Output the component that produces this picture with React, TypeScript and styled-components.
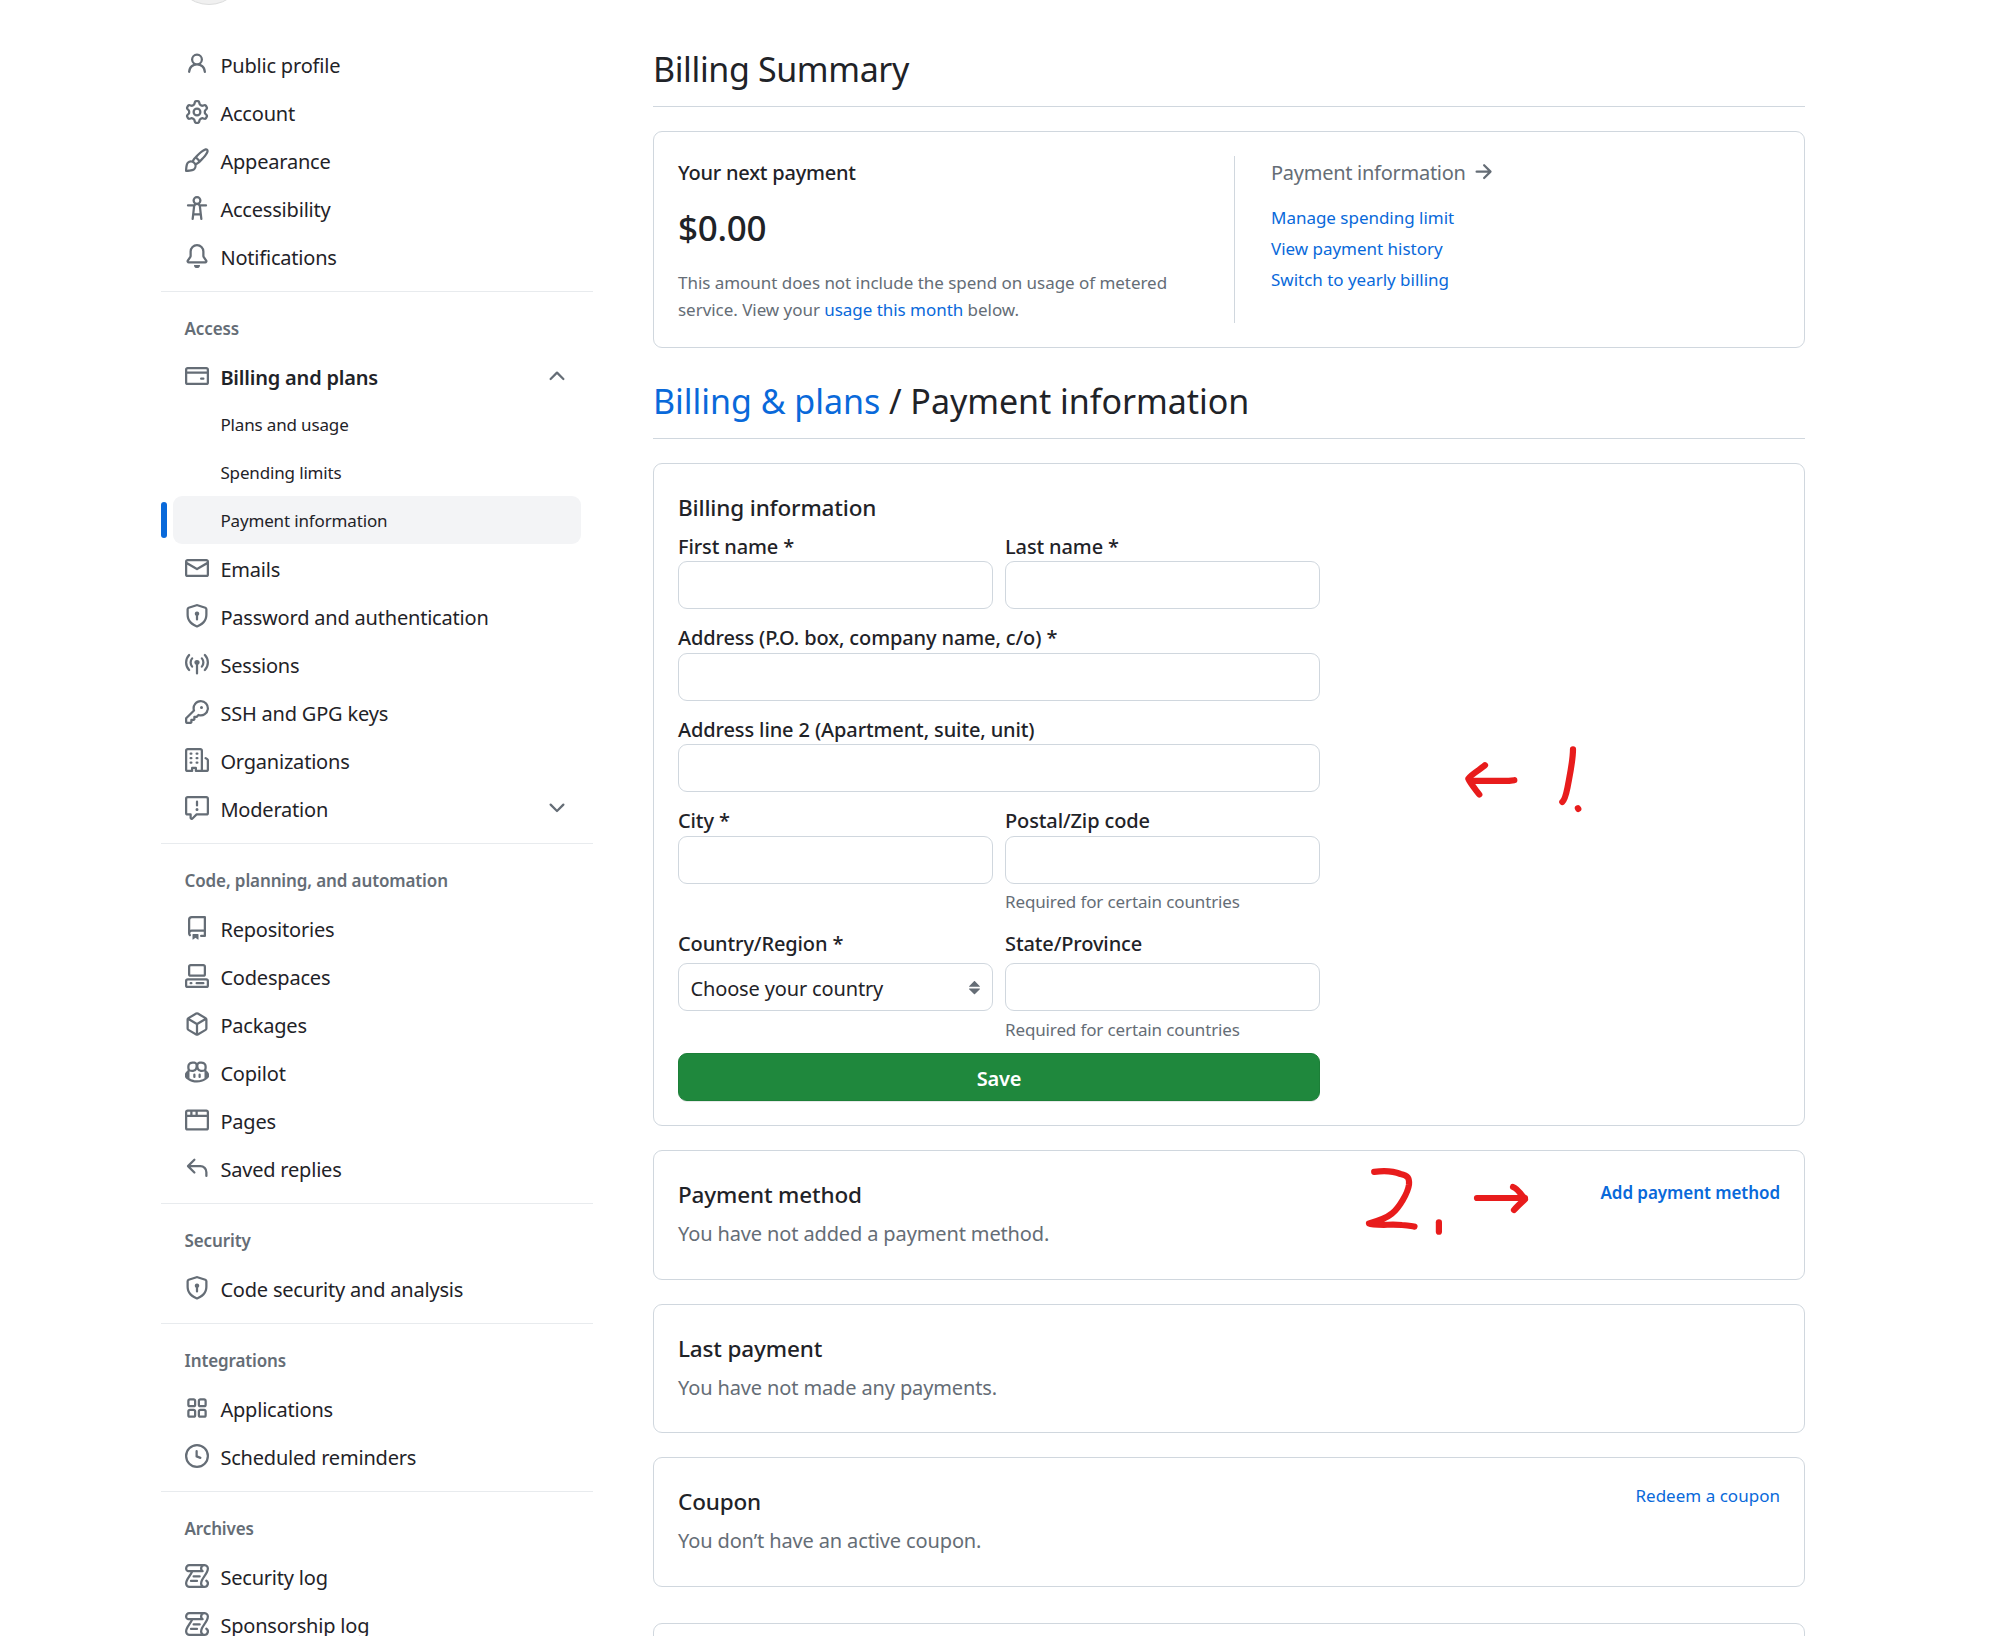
import React from 'react';
import styled, { createGlobalStyle, css } from 'styled-components';

const color = {
  text: '#1f2328',
  muted: '#656d76',
  link: '#0969da',
  border: '#d0d7de',
  divider: '#e8ebee',
  hover: '#f3f4f6',
  green: '#1f883d',
  ink: '#e81c1c',
};

const GlobalStyle = createGlobalStyle`
  *, *::before, *::after { box-sizing: border-box; }
  html, body { margin: 0; height: 1636px; overflow: hidden; background: #fff; }
  body {
    font-family: "Noto Sans", "Open Sans", sans-serif;
    font-size: 20px;
    color: ${color.text};
  }
  h1, h2, h3, p, ul { margin: 0; padding: 0; }
  ul { list-style: none; }
`;

/* ---------- icons (16-unit grid, drawn at 24px) ---------- */

const paths = {
  person:
    'M10.561 8.073a6.005 6.005 0 0 1 3.432 5.142.75.75 0 1 1-1.498.07 4.5 4.5 0 0 0-8.99 0 .75.75 0 0 1-1.498-.07 6.004 6.004 0 0 1 3.431-5.142 3.999 3.999 0 1 1 5.123 0ZM10.5 5a2.5 2.5 0 1 0-5 0 2.5 2.5 0 0 0 5 0Z',
  gear:
    'M8 0a8.2 8.2 0 0 1 .701.031C9.444.095 9.99.645 10.16 1.29l.288 1.107c.018.066.079.158.212.224.231.114.454.243.668.386.123.082.233.09.299.071l1.103-.303c.644-.176 1.392.021 1.82.63.27.385.506.792.704 1.218.315.675.111 1.422-.364 1.891l-.814.806c-.049.048-.098.147-.088.294.016.257.016.515 0 .772-.01.147.038.246.088.294l.814.806c.475.469.679 1.216.364 1.891a7.977 7.977 0 0 1-.704 1.217c-.428.61-1.176.807-1.82.63l-1.102-.302c-.067-.019-.177-.011-.3.071a5.909 5.909 0 0 1-.668.386c-.133.066-.194.158-.211.224l-.29 1.106c-.168.646-.715 1.196-1.458 1.26a8.006 8.006 0 0 1-1.402 0c-.743-.064-1.289-.614-1.458-1.26l-.289-1.106c-.018-.066-.079-.158-.212-.224a5.738 5.738 0 0 1-.668-.386c-.123-.082-.233-.09-.299-.071l-1.103.303c-.644.176-1.392-.021-1.82-.63a8.12 8.12 0 0 1-.704-1.218c-.315-.675-.111-1.422.363-1.891l.815-.806c.05-.048.098-.147.088-.294a6.214 6.214 0 0 1 0-.772c.01-.147-.038-.246-.088-.294l-.815-.806C.635 6.045.431 5.298.746 4.623a7.92 7.92 0 0 1 .704-1.217c.428-.61 1.176-.807 1.82-.63l1.102.302c.067.019.177.011.3-.071.214-.143.437-.272.668-.386.133-.066.194-.158.211-.224l.29-1.106C6.009.645 6.556.095 7.299.03 7.53.01 7.764 0 8 0Zm-.571 1.525c-.036.003-.108.036-.137.146l-.289 1.105c-.147.561-.549.967-.998 1.189-.173.086-.34.183-.5.29-.417.278-.97.423-1.529.27l-1.103-.303c-.109-.03-.175.016-.195.045-.22.312-.412.644-.573.99-.014.031-.021.11.059.19l.815.806c.411.406.562.957.53 1.456a4.709 4.709 0 0 0 0 .582c.032.499-.119 1.05-.53 1.456l-.815.806c-.081.08-.073.159-.059.19.162.346.353.677.573.989.02.03.085.076.195.046l1.102-.303c.56-.153 1.113-.008 1.53.27.161.107.328.204.501.29.447.222.85.629.997 1.189l.289 1.105c.029.109.101.143.137.146a6.6 6.6 0 0 0 1.142 0c.036-.003.108-.036.137-.146l.289-1.105c.147-.561.549-.967.998-1.189.173-.086.34-.183.5-.29.417-.278.97-.423 1.529-.27l1.103.303c.109.029.175-.016.195-.045.22-.313.411-.644.573-.99.014-.031.021-.11-.059-.19l-.815-.806c-.411-.406-.562-.957-.53-1.456a4.709 4.709 0 0 0 0-.582c-.032-.499.119-1.05.53-1.456l.815-.806c.081-.08.073-.159.059-.19a6.464 6.464 0 0 0-.573-.989c-.02-.03-.085-.076-.195-.046l-1.102.303c-.56.153-1.113.008-1.53-.27a4.44 4.44 0 0 0-.501-.29c-.447-.222-.85-.629-.997-1.189l-.289-1.105c-.029-.11-.101-.143-.137-.146a6.6 6.6 0 0 0-1.142 0ZM11 8a3 3 0 1 1-6 0 3 3 0 0 1 6 0ZM9.5 8a1.5 1.5 0 1 0-3.001.001A1.5 1.5 0 0 0 9.5 8Z',
  paintbrush:
    'M11.134 1.535c.7-.509 1.416-.942 2.076-1.155.649-.21 1.463-.267 2.069.34.603.601.568 1.411.368 2.07-.202.668-.624 1.39-1.125 2.096-1.011 1.424-2.496 2.987-3.775 4.249-1.098 1.084-2.132 1.839-3.04 2.3a3.744 3.744 0 0 1-1.055 3.217c-.431.431-1.065.691-1.657.861-.614.177-1.294.287-1.914.357A21.151 21.151 0 0 1 .797 16H.743l.007-.75H.749L.742 16a.75.75 0 0 1-.743-.742l.743-.008-.742.007v-.054a21.25 21.25 0 0 1 .13-2.284c.067-.647.187-1.287.358-1.914.17-.591.43-1.226.86-1.657a3.746 3.746 0 0 1 3.227-1.054c.466-.893 1.225-1.907 2.314-2.982 1.271-1.255 2.833-2.75 4.245-3.777ZM1.62 13.089c-.051.464-.086.929-.104 1.395.466-.018.932-.053 1.396-.104a10.511 10.511 0 0 0 1.668-.309c.526-.151.856-.325 1.011-.48a2.25 2.25 0 1 0-3.182-3.182c-.155.155-.329.485-.48 1.01a10.515 10.515 0 0 0-.309 1.67Zm10.396-10.34c-1.224.89-2.605 2.189-3.822 3.384l1.718 1.718c1.21-1.205 2.51-2.597 3.387-3.833.47-.662.78-1.227.912-1.662.134-.444.032-.551.009-.575h-.001V1.78c-.014-.014-.113-.113-.548.027-.432.14-.995.462-1.655.942Zm-4.832 7.266-.001.001a9.859 9.859 0 0 0 1.63-1.142L7.155 7.216a9.7 9.7 0 0 0-1.161 1.607c.482.302.889.71 1.19 1.192Z',
  accessibility:
    'M9.923 5.302c.063.063.122.129.178.198H14A.75.75 0 0 1 14 7h-3.3l.578 5.163.362 2.997a.75.75 0 0 1-1.49.18L9.868 13H6.132l-.282 2.34a.75.75 0 0 1-1.49-.18l.362-2.997L5.3 7H2a.75.75 0 0 1 0-1.5h3.9a2.54 2.54 0 0 1 .176-.198 3 3 0 1 1 3.847 0ZM9.2 7.073h-.001a1.206 1.206 0 0 0-2.398 0L6.305 11.5h3.39ZM9.5 3a1.5 1.5 0 1 0-3.001.001A1.5 1.5 0 0 0 9.5 3Z',
  bell:
    'M8 16a2 2 0 0 0 1.985-1.75c.017-.137-.097-.25-.235-.25h-3.5c-.138 0-.252.113-.235.25A2 2 0 0 0 8 16ZM3 5a5 5 0 0 1 10 0v2.947c0 .05.015.098.042.139l1.703 2.555A1.519 1.519 0 0 1 13.482 13H2.518a1.516 1.516 0 0 1-1.263-2.36l1.703-2.554A.255.255 0 0 0 3 7.947Zm5-3.5A3.5 3.5 0 0 0 4.5 5v2.947c0 .346-.102.683-.294.97l-1.703 2.556a.017.017 0 0 0-.003.01l.001.006c0 .002.002.004.004.006l.006.004.007.001h10.964l.007-.001.006-.004.004-.006.001-.007a.017.017 0 0 0-.003-.01l-1.703-2.554a1.745 1.745 0 0 1-.294-.97V5A3.5 3.5 0 0 0 8 1.5Z',
  creditCard:
    'M10.75 9a.75.75 0 0 0 0 1.5h1.5a.75.75 0 0 0 0-1.5h-1.5ZM0 3.75C0 2.784.784 2 1.75 2h12.5c.966 0 1.75.784 1.75 1.75v8.5A1.75 1.75 0 0 1 14.25 14H1.75A1.75 1.75 0 0 1 0 12.25ZM14.5 6.5h-13v5.75c0 .138.112.25.25.25h12.5a.25.25 0 0 0 .25-.25Zm0-2.75a.25.25 0 0 0-.25-.25H1.75a.25.25 0 0 0-.25.25V5h13Z',
  mail:
    'M1.75 2h12.5c.966 0 1.75.784 1.75 1.75v8.5A1.75 1.75 0 0 1 14.25 14H1.75A1.75 1.75 0 0 1 0 12.25v-8.5C0 2.784.784 2 1.75 2ZM1.5 12.251c0 .138.112.25.25.25h12.5a.25.25 0 0 0 .25-.25V5.809L8.38 9.397a.75.75 0 0 1-.76 0L1.5 5.809v6.442Zm13-8.181v-.32a.25.25 0 0 0-.25-.25H1.75a.25.25 0 0 0-.25.25v.32L8 7.88Z',
  shieldLock:
    'm8.533.133 5.25 1.68A1.75 1.75 0 0 1 15 3.48V7c0 1.566-.32 3.182-1.303 4.682-.983 1.498-2.585 2.813-5.032 3.855a1.697 1.697 0 0 1-1.33 0c-2.447-1.042-4.049-2.357-5.032-3.855C1.32 10.182 1 8.566 1 7V3.48a1.755 1.755 0 0 1 1.217-1.667l5.25-1.68a1.748 1.748 0 0 1 1.066 0Zm-.61 1.429.001.001-5.25 1.68a.251.251 0 0 0-.174.237V7c0 1.36.275 2.666 1.057 3.859.784 1.194 2.121 2.342 4.366 3.298a.196.196 0 0 0 .154 0c2.245-.957 3.582-2.103 4.366-3.297C13.225 9.666 13.5 8.358 13.5 7V3.48a.25.25 0 0 0-.174-.238l-5.25-1.68a.25.25 0 0 0-.153 0ZM9.5 6.5c0 .536-.286 1.032-.75 1.3v2.45a.75.75 0 0 1-1.5 0V7.8A1.5 1.5 0 1 1 9.5 6.5Z',
  broadcast:
    'M8.75 8.582v5.668a.75.75 0 0 1-1.5 0V8.582a1.75 1.75 0 1 1 1.5 0Zm3.983-7.125a.75.75 0 0 1 1.06.026A7.976 7.976 0 0 1 16 7c0 2.139-.84 4.083-2.207 5.517a.75.75 0 1 1-1.086-1.034A6.474 6.474 0 0 0 14.5 7a6.474 6.474 0 0 0-1.793-4.483.75.75 0 0 1 .026-1.06Zm-9.466 0c.3.286.312.76.026 1.06A6.474 6.474 0 0 0 1.5 7a6.47 6.47 0 0 0 1.793 4.483.75.75 0 0 1-1.086 1.034A7.973 7.973 0 0 1 0 7c0-2.139.84-4.083 2.207-5.517a.75.75 0 0 1 1.06-.026Zm8.556 2.321A4.988 4.988 0 0 1 13 7a4.988 4.988 0 0 1-1.177 3.222.75.75 0 1 1-1.146-.967A3.487 3.487 0 0 0 11.5 7c0-.86-.309-1.645-.823-2.255a.75.75 0 0 1 1.146-.967Zm-6.492.958A3.48 3.48 0 0 0 4.5 7a3.48 3.48 0 0 0 .823 2.255.75.75 0 0 1-1.146.967A4.981 4.981 0 0 1 3 7a4.982 4.982 0 0 1 1.188-3.236.75.75 0 1 1 1.143.972Z',
  key:
    'M10.5 0a5.499 5.499 0 1 1-1.288 10.848l-.932.932a.749.749 0 0 1-.53.22H7v.75a.749.749 0 0 1-.22.53l-.5.5a.749.749 0 0 1-.53.22H5v.75a.749.749 0 0 1-.22.53l-.5.5a.749.749 0 0 1-.53.22h-2A1.75 1.75 0 0 1 0 14.25v-2c0-.199.079-.389.22-.53l4.932-4.932A5.5 5.5 0 0 1 10.5 0Zm-4 5.5c-.001.431.069.86.205 1.269a.75.75 0 0 1-.181.768L1.5 12.56v1.69c0 .138.112.25.25.25h1.69l.06-.06v-1.19a.75.75 0 0 1 .75-.75h1.19l.06-.06v-1.19a.75.75 0 0 1 .75-.75h1.19l1.023-1.025a.75.75 0 0 1 .768-.18A4 4 0 1 0 6.5 5.5ZM11 6a1 1 0 1 1 0-2 1 1 0 0 1 0 2Z',
  organization:
    'M1.75 16A1.75 1.75 0 0 1 0 14.25V1.75C0 .784.784 0 1.75 0h8.5C11.216 0 12 .784 12 1.75v12.5c0 .085-.006.168-.018.25h2.268a.25.25 0 0 0 .25-.25V8.285a.25.25 0 0 0-.111-.208l-1.055-.703a.749.749 0 1 1 .832-1.248l1.055.703c.487.325.779.871.779 1.456v5.965A1.75 1.75 0 0 1 14.25 16h-3.5a.766.766 0 0 1-.197-.026c-.099.017-.2.026-.303.026h-3a.75.75 0 0 1-.75-.75V14h-1v1.25a.75.75 0 0 1-.75.75Zm-.25-1.75c0 .138.112.25.25.25H4v-1.25a.75.75 0 0 1 .75-.75h2.5a.75.75 0 0 1 .75.75v1.25h2.25a.25.25 0 0 0 .25-.25V1.75a.25.25 0 0 0-.25-.25h-8.5a.25.25 0 0 0-.25.25ZM3.75 6h.5a.75.75 0 0 1 0 1.5h-.5a.75.75 0 0 1 0-1.5ZM3 3.75A.75.75 0 0 1 3.75 3h.5a.75.75 0 0 1 0 1.5h-.5A.75.75 0 0 1 3 3.75Zm4 3A.75.75 0 0 1 7.75 6h.5a.75.75 0 0 1 0 1.5h-.5A.75.75 0 0 1 7 6.75ZM7.75 3h.5a.75.75 0 0 1 0 1.5h-.5a.75.75 0 0 1 0-1.5ZM3 9.75A.75.75 0 0 1 3.75 9h.5a.75.75 0 0 1 0 1.5h-.5A.75.75 0 0 1 3 9.75ZM7.75 9h.5a.75.75 0 0 1 0 1.5h-.5a.75.75 0 0 1 0-1.5Z',
  report:
    'M0 1.75C0 .784.784 0 1.75 0h12.5C15.216 0 16 .784 16 1.75v9.5A1.75 1.75 0 0 1 14.25 13H8.06l-2.573 2.573A1.458 1.458 0 0 1 3 14.543V13H1.75A1.75 1.75 0 0 1 0 11.25Zm1.75-.25a.25.25 0 0 0-.25.25v9.5c0 .138.112.25.25.25h2a.75.75 0 0 1 .75.75v2.19l2.72-2.72a.749.749 0 0 1 .53-.22h6.5a.25.25 0 0 0 .25-.25v-9.5a.25.25 0 0 0-.25-.25Zm7 2.25v2.5a.75.75 0 0 1-1.5 0v-2.5a.75.75 0 0 1 1.5 0ZM9 9a1 1 0 1 1-2 0 1 1 0 0 1 2 0Z',
  repo:
    'M2 2.5A2.5 2.5 0 0 1 4.5 0h8.75a.75.75 0 0 1 .75.75v12.5a.75.75 0 0 1-.75.75h-2.5a.75.75 0 0 1 0-1.5h1.75v-2h-8a1 1 0 0 0-.714 1.7.75.75 0 1 1-1.072 1.05A2.495 2.495 0 0 1 2 11.5Zm10.5-1h-8a1 1 0 0 0-1 1v6.708A2.486 2.486 0 0 1 4.5 9h8ZM5 12.25a.25.25 0 0 1 .25-.25h3.5a.25.25 0 0 1 .25.25v3.25a.25.25 0 0 1-.4.2l-1.45-1.087a.249.249 0 0 0-.3 0L5.4 15.7a.25.25 0 0 1-.4-.2Z',
  codespaces:
    'M0 11.25c0-.966.784-1.75 1.75-1.75h12.5c.966 0 1.75.784 1.75 1.75v3A1.75 1.75 0 0 1 14.25 16H1.75A1.75 1.75 0 0 1 0 14.25Zm2-9.5C2 .784 2.784 0 3.75 0h8.5C13.216 0 14 .784 14 1.75v5a1.75 1.75 0 0 1-1.75 1.75h-8.5A1.75 1.75 0 0 1 2 6.75Zm1.75-.25a.25.25 0 0 0-.25.25v5c0 .138.112.25.25.25h8.5a.25.25 0 0 0 .25-.25v-5a.25.25 0 0 0-.25-.25Zm-2 9.5a.25.25 0 0 0-.25.25v3c0 .138.112.25.25.25h12.5a.25.25 0 0 0 .25-.25v-3a.25.25 0 0 0-.25-.25ZM7 12.75a.75.75 0 0 1 .75-.75h4.5a.75.75 0 0 1 0 1.5h-4.5a.75.75 0 0 1-.75-.75Zm-4 0a.75.75 0 0 1 .75-.75h.5a.75.75 0 0 1 0 1.5h-.5a.75.75 0 0 1-.75-.75Z',
  package:
    'm8.878.392 5.25 3.045c.54.314.872.89.872 1.514v6.098a1.75 1.75 0 0 1-.872 1.514l-5.25 3.045a1.75 1.75 0 0 1-1.756 0l-5.25-3.045A1.75 1.75 0 0 1 1 11.049V4.951c0-.624.332-1.201.872-1.514L7.122.392a1.75 1.75 0 0 1 1.756 0ZM7.875 1.69l-4.63 2.685L8 7.133l4.755-2.758-4.63-2.685a.248.248 0 0 0-.25 0ZM2.5 5.677v5.372c0 .09.047.171.125.216l4.625 2.683V8.432Zm6.25 8.271 4.625-2.683a.25.25 0 0 0 .125-.216V5.677L8.75 8.432Z',
  copilot:
    'M7.998 15.035c-4.562 0-7.873-2.914-7.998-3.749V9.338c.085-.628.677-1.686 1.588-2.065.013-.07.024-.143.036-.218.029-.183.06-.384.126-.612-.201-.508-.254-1.084-.254-1.656 0-.87.128-1.769.693-2.484.579-.733 1.494-1.124 2.724-1.261 1.206-.134 2.262.034 2.944.765.05.053.096.108.139.165.044-.057.094-.112.143-.165.682-.731 1.738-.899 2.944-.765 1.23.137 2.145.528 2.724 1.261.566.715.693 1.614.693 2.484 0 .572-.053 1.148-.254 1.656.066.228.098.429.126.612.012.076.024.148.037.218.924.385 1.522 1.471 1.591 2.095v1.872c0 .766-3.351 3.795-8.002 3.795Zm0-1.485c2.28 0 4.584-1.11 5.002-1.433V7.862l-.023-.116c-.49.21-1.075.291-1.727.291-1.146 0-2.059-.327-2.71-.991A3.222 3.222 0 0 1 8 6.303a3.24 3.24 0 0 1-.544.743c-.65.664-1.563.991-2.71.991-.652 0-1.236-.081-1.727-.291l-.023.116v4.255c.419.323 2.722 1.433 5.002 1.433ZM6.762 2.83c-.193-.206-.637-.413-1.682-.297-1.019.113-1.479.404-1.713.7-.247.312-.369.789-.369 1.554 0 .793.129 1.171.308 1.371.162.181.519.379 1.442.379.853 0 1.339-.235 1.638-.54.315-.322.527-.827.617-1.553.117-.935-.037-1.395-.241-1.614Zm4.155-.297c-1.044-.116-1.488.091-1.681.297-.204.219-.359.679-.242 1.614.091.726.303 1.231.618 1.553.299.305.784.54 1.638.54.922 0 1.28-.198 1.442-.379.179-.2.308-.578.308-1.371 0-.765-.123-1.242-.37-1.554-.233-.296-.693-.587-1.713-.7ZM6.25 9.037a.75.75 0 0 1 .75.75v1.501a.75.75 0 0 1-1.5 0V9.787a.75.75 0 0 1 .75-.75Zm4.25.75v1.501a.75.75 0 0 1-1.5 0V9.787a.75.75 0 0 1 1.5 0Z',
  browser:
    'M0 2.75C0 1.784.784 1 1.75 1h12.5c.966 0 1.75.784 1.75 1.75v10.5A1.75 1.75 0 0 1 14.25 15H1.75A1.75 1.75 0 0 1 0 13.25ZM14.5 6h-13v7.25c0 .138.112.25.25.25h12.5a.25.25 0 0 0 .25-.25Zm-6-3.5v2h6V2.75a.25.25 0 0 0-.25-.25ZM5 2.5v2h2v-2Zm-3.25 0a.25.25 0 0 0-.25.25V4.5h2v-2Z',
  reply:
    'M6.78 1.97a.75.75 0 0 1 0 1.06L3.81 6h6.44A4.75 4.75 0 0 1 15 10.75v2.5a.75.75 0 0 1-1.5 0v-2.5a3.25 3.25 0 0 0-3.25-3.25H3.81l2.97 2.97a.749.749 0 0 1-.326 1.275.749.749 0 0 1-.734-.215L1.47 7.28a.75.75 0 0 1 0-1.06l4.25-4.25a.75.75 0 0 1 1.06 0Z',
  apps:
    'M1.5 3.25c0-.966.784-1.75 1.75-1.75h2.5c.966 0 1.75.784 1.75 1.75v2.5A1.75 1.75 0 0 1 5.75 7.5h-2.5A1.75 1.75 0 0 1 1.5 5.75Zm7 0c0-.966.784-1.75 1.75-1.75h2.5c.966 0 1.75.784 1.75 1.75v2.5a1.75 1.75 0 0 1-1.75 1.75h-2.5A1.75 1.75 0 0 1 8.5 5.75Zm-7 7c0-.966.784-1.75 1.75-1.75h2.5c.966 0 1.75.784 1.75 1.75v2.5a1.75 1.75 0 0 1-1.75 1.75h-2.5a1.75 1.75 0 0 1-1.75-1.75Zm7 0c0-.966.784-1.75 1.75-1.75h2.5c.966 0 1.75.784 1.75 1.75v2.5a1.75 1.75 0 0 1-1.75 1.75h-2.5a1.75 1.75 0 0 1-1.75-1.75ZM3.25 3a.25.25 0 0 0-.25.25v2.5c0 .138.112.25.25.25h2.5A.25.25 0 0 0 6 5.75v-2.5A.25.25 0 0 0 5.75 3Zm7 0a.25.25 0 0 0-.25.25v2.5c0 .138.112.25.25.25h2.5a.25.25 0 0 0 .25-.25v-2.5a.25.25 0 0 0-.25-.25Zm-7 7a.25.25 0 0 0-.25.25v2.5c0 .138.112.25.25.25h2.5a.25.25 0 0 0 .25-.25v-2.5a.25.25 0 0 0-.25-.25Zm7 0a.25.25 0 0 0-.25.25v2.5c0 .138.112.25.25.25h2.5a.25.25 0 0 0 .25-.25v-2.5a.25.25 0 0 0-.25-.25Z',
  clock:
    'M8 0a8 8 0 1 1 0 16A8 8 0 0 1 8 0ZM1.5 8a6.5 6.5 0 1 0 13 0 6.5 6.5 0 0 0-13 0Zm7-3.25v2.992l2.028.812a.75.75 0 0 1-.557 1.392l-2.5-1A.751.751 0 0 1 7 8.25v-3.5a.75.75 0 0 1 1.5 0Z',
  log:
    'M5 8.25a.75.75 0 0 1 .75-.75h4a.75.75 0 0 1 0 1.5h-4A.75.75 0 0 1 5 8.25ZM4 10.5A.75.75 0 0 0 4 12h4a.75.75 0 0 0 0-1.5H4ZM13-.005c1.654 0 3 1.328 3 3 0 .982-.338 1.933-.783 2.818-.443.879-1.028 1.758-1.582 2.588l-.011.017c-.568.853-1.104 1.659-1.501 2.446-.398.789-.623 1.494-.623 2.136a1.5 1.5 0 1 0 2.333-1.248.75.75 0 0 1 .834-1.246A3 3 0 0 1 13 16H3a3 3 0 0 1-3-3c0-1.582.891-3.135 1.777-4.506.209-.322.418-.637.623-.946.473-.709.923-1.386 1.287-2.048H2.51c-.576 0-1.381-.133-1.907-.783A2.68 2.68 0 0 1 0 2.995a3 3 0 0 1 3-3Zm0 1.5a1.5 1.5 0 0 0-1.5 1.5c0 .476.223.834.667 1.132A.75.75 0 0 1 11.75 5.5H5.368c-.467 1.003-1.141 2.015-1.773 2.963-.192.289-.381.571-.558.845C2.13 10.711 1.5 11.916 1.5 13A1.5 1.5 0 0 0 3 14.5h7.401A2.989 2.989 0 0 1 10 13c0-.979.338-1.928.784-2.812.441-.874 1.023-1.748 1.575-2.576l.017-.026c.568-.853 1.103-1.658 1.501-2.448.398-.79.623-1.497.623-2.143 0-.838-.669-1.5-1.5-1.5Zm-10 0a1.5 1.5 0 0 0-1.5 1.5c0 .321.1.569.27.778.097.12.325.227.74.227h7.674A2.737 2.737 0 0 1 10 2.995c0-.546.146-1.059.401-1.5Z',
  arrowRight:
    'M8.22 2.97a.75.75 0 0 1 1.06 0l4.25 4.25a.75.75 0 0 1 0 1.06l-4.25 4.25a.751.751 0 0 1-1.042-.018.751.751 0 0 1-.018-1.042l2.97-2.97H3.75a.75.75 0 0 1 0-1.5h7.44L8.22 4.03a.75.75 0 0 1 0-1.06Z',
  chevronDown:
    'M12.78 5.22a.749.749 0 0 1 0 1.06l-4.25 4.25a.749.749 0 0 1-1.06 0L3.22 6.28a.749.749 0 1 1 1.06-1.06L8 8.939l3.72-3.719a.749.749 0 0 1 1.06 0Z',
  chevronUp:
    'M3.22 10.53a.749.749 0 0 1 0-1.06l4.25-4.25a.749.749 0 0 1 1.06 0l4.25 4.25a.749.749 0 1 1-1.06 1.06L8 6.811 4.28 10.53a.749.749 0 0 1-1.06 0Z',
  selectArrows:
    'm4.074 9.427 3.396 3.396a.25.25 0 0 0 .354 0l3.396-3.396A.25.25 0 0 0 11.043 9H4.251a.25.25 0 0 0-.177.427ZM4.074 7.47 7.47 4.073a.25.25 0 0 1 .354 0L11.22 7.47a.25.25 0 0 1-.177.426H4.251a.25.25 0 0 1-.177-.426Z',
};
type IconName = keyof typeof paths;

const IconSvg = styled.svg`
  flex: none;
  width: 24px;
  height: 24px;
  fill: ${color.muted};
`;
const Icon = ({ name }: { name: IconName }) => (
  <IconSvg viewBox="0 0 16 16" aria-hidden="true">
    <path d={paths[name]} />
  </IconSvg>
);

/* ---------- page frame ---------- */

const Page = styled.div`
  position: relative;
  display: flex;
  gap: 60px;
  width: 2008px;
  height: 1636px;
  padding-left: 161px;
  overflow: hidden;
`;

/* ---------- sidebar ---------- */

const Sidebar = styled.aside`
  flex: none;
  width: 432px;
  margin-top: -67px;
`;
const Avatar = styled.div`
  width: 72px;
  height: 72px;
  margin: 0 0 35px 12px;
  border-radius: 50%;
  background: #f0f0f0;
  border: 1px solid #dcdddd;
`;
const Group = styled.ul`
  & + & {
    margin-top: 11px;
    border-top: 1px solid ${color.divider};
  }
`;
const GroupTitle = styled.li`
  display: flex;
  align-items: center;
  height: 60px;
  padding: 13px 24px 0 23.5px;
  font-size: 17px;
  font-weight: 600;
  letter-spacing: -0.12px;
  color: ${color.muted};
`;
const NavRow = styled.li<{ $sub?: boolean; $current?: boolean }>`
  position: relative;
  display: flex;
  align-items: center;
  gap: 11.4px;
  height: 48px;
  margin: 0 12px;
  padding: 0 12px;
  border-radius: 9px;
  ${p => p.$sub && css`padding-left: 47.4px;`}
  ${p =>
    p.$current &&
    css`
      background: ${color.hover};
      &::before {
        content: '';
        position: absolute;
        left: -12px;
        top: 6px;
        width: 6px;
        height: 36px;
        border-radius: 3px;
        background: ${color.link};
      }
    `}
`;
const NavLabel = styled.span<{ $sub?: boolean; $bold?: boolean }>`
  flex: 1;
  white-space: nowrap;
  padding-top: ${p => (p.$sub ? 0 : 2)}px;
  font-size: ${p => (p.$sub ? 17 : 20)}px;
  font-weight: ${p => (p.$bold ? 600 : 400)};
  letter-spacing: ${p => (p.$sub ? -0.15 : -0.2)}px;
`;

type NavItem = { label: string; icon?: IconName; trailing?: IconName; bold?: boolean; current?: boolean };
const nav: { title?: string; items: NavItem[] }[] = [
  {
    items: [
      { label: 'Public profile', icon: 'person' },
      { label: 'Account', icon: 'gear' },
      { label: 'Appearance', icon: 'paintbrush' },
      { label: 'Accessibility', icon: 'accessibility' },
      { label: 'Notifications', icon: 'bell' },
    ],
  },
  {
    title: 'Access',
    items: [
      { label: 'Billing and plans', icon: 'creditCard', trailing: 'chevronUp', bold: true },
      { label: 'Plans and usage' },
      { label: 'Spending limits' },
      { label: 'Payment information', current: true },
      { label: 'Emails', icon: 'mail' },
      { label: 'Password and authentication', icon: 'shieldLock' },
      { label: 'Sessions', icon: 'broadcast' },
      { label: 'SSH and GPG keys', icon: 'key' },
      { label: 'Organizations', icon: 'organization' },
      { label: 'Moderation', icon: 'report', trailing: 'chevronDown' },
    ],
  },
  {
    title: 'Code, planning, and automation',
    items: [
      { label: 'Repositories', icon: 'repo' },
      { label: 'Codespaces', icon: 'codespaces' },
      { label: 'Packages', icon: 'package' },
      { label: 'Copilot', icon: 'copilot' },
      { label: 'Pages', icon: 'browser' },
      { label: 'Saved replies', icon: 'reply' },
    ],
  },
  { title: 'Security', items: [{ label: 'Code security and analysis', icon: 'shieldLock' }] },
  {
    title: 'Integrations',
    items: [
      { label: 'Applications', icon: 'apps' },
      { label: 'Scheduled reminders', icon: 'clock' },
    ],
  },
  {
    title: 'Archives',
    items: [
      { label: 'Security log', icon: 'log' },
      { label: 'Sponsorship log', icon: 'log' },
    ],
  },
];

/* ---------- main column ---------- */

const Main = styled.main`
  flex: none;
  width: 1152px;
  padding-top: 42px;
`;
const PageTitle = styled.h1<{ $spacing: number }>`
  margin-bottom: 24px;
  padding-bottom: 10px;
  border-bottom: 1px solid ${color.border};
  font-size: 34px;
  font-weight: 400;
  line-height: 54px;
  letter-spacing: ${p => p.$spacing}px;
`;
const Link = styled.a`
  color: ${color.link};
  text-decoration: none;
`;
const Card = styled.section<{ $h?: number; $mb?: number }>`
  ${p => p.$h && css`height: ${p.$h}px;`}
  margin-bottom: ${p => p.$mb ?? 24}px;
  padding: 24px;
  border: 1px solid ${color.border};
  border-radius: 9px;
`;
const SummaryCard = styled(Card)`
  display: flex;
`;
const SummaryLeft = styled.div`
  width: 556px;
`;
const SummaryRight = styled.div`
  flex: 1;
  padding-left: 36px;
  border-left: 1px solid ${color.border};
`;
const SummaryTitle = styled.h3`
  padding-top: 1px;
  font-size: 20px;
  font-weight: 550;
  line-height: 32px;
  letter-spacing: -0.22px;
`;
const Amount = styled.p`
  margin: 12px 0 14px;
  font-size: 35px;
  font-weight: 500;
  line-height: 54px;
  letter-spacing: -0.3px;
`;
const Note = styled.p`
  width: 520px;
  font-size: 17px;
  line-height: 27px;
  letter-spacing: -0.04px;
  color: ${color.muted};
`;
const SummaryLink = styled.div`
  display: flex;
  align-items: center;
  gap: 5px;
  height: 32px;
  margin-bottom: 13.6px;
  letter-spacing: -0.27px;
  color: ${color.muted};
`;
const QuickLinks = styled.ul`
  font-size: 17px;
  line-height: 31.4px;
  letter-spacing: -0.02px;
`;

const CardTitle = styled.h3`
  padding-top: 1px;
  font-size: 22.5px;
  font-weight: 550;
  line-height: 38px;
  letter-spacing: -0.15px;
`;
const CardText = styled.p`
  margin-top: 4px;
  line-height: 32px;
  letter-spacing: -0.13px;
  color: ${color.muted};
`;
const CardHead = styled.div`
  display: flex;
  justify-content: space-between;
  align-items: flex-start;
`;
const CardAction = styled(Link)<{ $strong?: boolean }>`
  margin-top: ${p => (p.$strong ? 4 : 0)}px;
  font-size: 17px;
  font-weight: ${p => (p.$strong ? 600 : 400)};
  line-height: 27px;
  letter-spacing: ${p => (p.$strong ? -0.06 : 0.02)}px;
`;

/* ---------- form ---------- */

const Form = styled.form`
  width: 642px;
  margin-top: 4px;
`;
const FieldRow = styled.div<{ $mt?: number }>`
  display: flex;
  align-items: flex-start;
  gap: 12px;
  margin-top: ${p => p.$mt ?? 0}px;
`;
const Field = styled.div`
  flex: 1;
`;
const Label = styled.label<{ $h?: number }>`
  display: block;
  height: ${p => p.$h ?? 30}px;
  padding-top: 1px;
  font-weight: 550;
  line-height: 30px;
  letter-spacing: -0.12px;
`;
const control = css`
  display: flex;
  align-items: center;
  width: 100%;
  height: 48px;
  border: 1px solid ${color.border};
  border-radius: 9px;
  background: #fff;
`;
const Input = styled.input`
  ${control}
  padding: 0 12px;
  outline: none;
`;
const Select = styled.div`
  ${control}
  justify-content: space-between;
  padding: 0 5.5px 0 11.5px;
  letter-spacing: -0.15px;
`;
const SelectValue = styled.span`
  padding-top: 2px;
`;
const Hint = styled.p<{ $mt: number }>`
  margin-top: ${p => p.$mt}px;
  font-size: 17px;
  line-height: 27px;
  letter-spacing: -0.13px;
  color: ${color.muted};
`;
const SaveButton = styled.button`
  display: block;
  width: 100%;
  height: 48px;
  margin-top: 10px;
  padding: 2px 0 0;
  border: 1px solid #1c7f38;
  border-radius: 9px;
  background: ${color.green};
  box-shadow: 0 1px 0 rgba(31, 35, 40, 0.1);
  color: #fff;
  font: inherit;
  font-weight: 600;
  letter-spacing: -0.2px;
`;

/* ---------- pen marks drawn over the page ---------- */

const PenLayer = styled.svg`
  position: absolute;
  left: 1360px;
  top: 730px;
  width: 240px;
  height: 510px;
  pointer-events: none;
  fill: none;
  stroke: ${color.ink};
  stroke-width: 6.2;
  stroke-linecap: round;
  stroke-linejoin: round;
`;
const PenMarks = () => (
  <PenLayer viewBox="1360 730 240 510" aria-hidden="true">
    <path d="M1472 780.9 L1509 780.9 L1514.3 780.2" />
    <path d="M1485 765.2 C1482 768.5 1472 773.5 1468.3 778.7 C1470 783.2 1476 790 1479.3 794.5" />
    <path d="M1573 749.3 C1573 760.5 1570.5 771.5 1567.5 787.5 C1566 795 1565 799.5 1562.3 802" />
    <path d="M1577.9 808.2 L1578.3 808.9" />
    <path d="M1374.2 1171.9 C1385 1170.5 1393 1171 1400.5 1174 C1408 1175.5 1409.5 1178 1409 1184.5 C1408 1193 1399 1208 1392 1213.5 C1386 1218.5 1380 1220.5 1369 1223.5 C1374 1226 1392 1224 1402 1225 C1408 1225.3 1411 1226 1414.5 1226.6" />
    <path d="M1438.9 1222.3 L1438.9 1231.7" />
    <path d="M1477 1198 L1525 1198" />
    <path d="M1513 1187 C1517 1188 1521 1194 1525 1199.3 C1521 1203 1517.5 1206 1514 1210" />
  </PenLayer>
);

export default function App() {
  return (
    <Page>
      <GlobalStyle />
      <Sidebar>
        <Avatar />
        {nav.map((group, i) => (
          <Group key={i}>
            {group.title && <GroupTitle>{group.title}</GroupTitle>}
            {group.items.map(item => (
              <NavRow key={item.label} $sub={!item.icon} $current={item.current}>
                {item.icon && <Icon name={item.icon} />}
                <NavLabel $sub={!item.icon} $bold={item.bold}>
                  {item.label}
                </NavLabel>
                {item.trailing && <Icon name={item.trailing} />}
              </NavRow>
            ))}
          </Group>
        ))}
      </Sidebar>

      <Main>
        <PageTitle $spacing={-0.38}>Billing Summary</PageTitle>
        <SummaryCard $h={217} $mb={26}>
          <SummaryLeft>
            <SummaryTitle>Your next payment</SummaryTitle>
            <Amount>$0.00</Amount>
            <Note>
              This amount does not include the spend on usage of metered service. View your{' '}
              <Link>usage this month</Link> below.
            </Note>
          </SummaryLeft>
          <SummaryRight>
            <SummaryLink>
              Payment information
              <Icon name="arrowRight" />
            </SummaryLink>
            <QuickLinks>
              <li><Link>Manage spending limit</Link></li>
              <li><Link>View payment history</Link></li>
              <li><Link>Switch to yearly billing</Link></li>
            </QuickLinks>
          </SummaryRight>
        </SummaryCard>

        <PageTitle $spacing={-0.04}>
          <Link>Billing &amp; plans</Link> / Payment information
        </PageTitle>
        <Card $h={663}>
          <CardTitle>Billing information</CardTitle>
          <Form>
            <FieldRow>
              <Field>
                <Label>First name *</Label>
                <Input />
              </Field>
              <Field>
                <Label>Last name *</Label>
                <Input />
              </Field>
            </FieldRow>
            <FieldRow $mt={13}>
              <Field>
                <Label $h={31}>Address (P.O. box, company name, c/o) *</Label>
                <Input />
              </Field>
            </FieldRow>
            <FieldRow $mt={13}>
              <Field>
                <Label>Address line 2 (Apartment, suite, unit)</Label>
                <Input />
              </Field>
            </FieldRow>
            <FieldRow $mt={13}>
              <Field>
                <Label $h={31}>City *</Label>
                <Input />
              </Field>
              <Field>
                <Label $h={31}>Postal/Zip code</Label>
                <Input />
                <Hint $mt={4}>Required for certain countries</Hint>
              </Field>
            </FieldRow>
            <FieldRow $mt={13}>
              <Field>
                <Label $h={35}>Country/Region *</Label>
                <Select>
                  <SelectValue>Choose your country</SelectValue>
                  <Icon name="selectArrows" />
                </Select>
              </Field>
              <Field>
                <Label $h={35}>State/Province</Label>
                <Input />
                <Hint $mt={5}>Required for certain countries</Hint>
              </Field>
            </FieldRow>
            <SaveButton type="button">Save</SaveButton>
          </Form>
        </Card>

        <Card $h={130}>
          <CardHead>
            <CardTitle>Payment method</CardTitle>
            <CardAction $strong>Add payment method</CardAction>
          </CardHead>
          <CardText>You have not added a payment method.</CardText>
        </Card>
        <Card $h={129}>
          <CardTitle>Last payment</CardTitle>
          <CardText>You have not made any payments.</CardText>
        </Card>
        <Card $h={130} $mb={36}>
          <CardHead>
            <CardTitle>Coupon</CardTitle>
            <CardAction>Redeem a coupon</CardAction>
          </CardHead>
          <CardText>You don’t have an active coupon.</CardText>
        </Card>
        <Card $h={130} />
      </Main>
      <PenMarks />
    </Page>
  );
}
